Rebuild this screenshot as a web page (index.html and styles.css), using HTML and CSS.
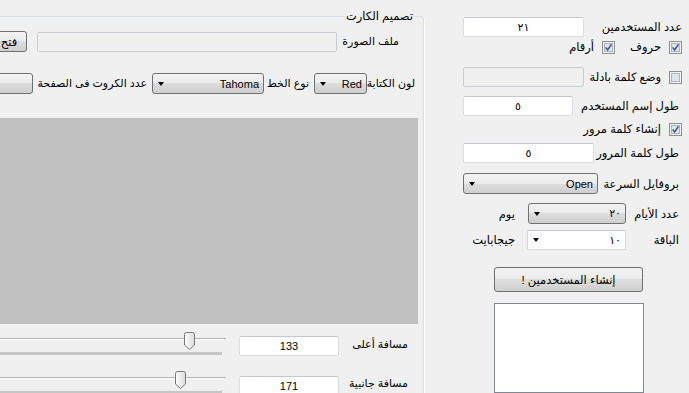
FILE: index.html
```html
<!DOCTYPE html>
<html lang="ar" dir="rtl">
<head>
<meta charset="UTF-8">
<title>إنشاء المستخدمين</title>
<link rel="stylesheet" href="styles.css">
</head>
<body>
<div class="window">

  <!-- users settings -->
  <div class="side">
    <div class="row r1">
      <span class="lbl">عدد المستخدمين</span>
      <span class="text push w121">٢١</span>
    </div>
    <div class="row r2">
      <svg class="check" viewBox="0 0 13 13"><rect x=".5" y=".5" width="12" height="12" fill="#f4f4f4" stroke="#8e8f8f"/><rect x="2.5" y="2.5" width="8" height="8" fill="#e1e4ea" stroke="#aeb3bb"/><path d="M3.6 6.4l2 2.6 3.9-5.6" fill="none" stroke="#3d518a" stroke-width="1.5"/></svg>
      <span class="lbl cl">حروف</span>
      <svg class="check c2" viewBox="0 0 13 13"><rect x=".5" y=".5" width="12" height="12" fill="#f4f4f4" stroke="#8e8f8f"/><rect x="2.5" y="2.5" width="8" height="8" fill="#e1e4ea" stroke="#aeb3bb"/><path d="M3.6 6.4l2 2.6 3.9-5.6" fill="none" stroke="#3d518a" stroke-width="1.5"/></svg>
      <span class="lbl cl">أرقام</span>
    </div>
    <div class="row r3">
      <svg class="check" viewBox="0 0 13 13"><rect x=".5" y=".5" width="12" height="12" fill="#f4f4f4" stroke="#8e8f8f"/><rect x="2.5" y="2.5" width="8" height="8" fill="#e1e4ea" stroke="#aeb3bb"/></svg>
      <span class="lbl cl">وضع كلمة بادلة</span>
      <span class="text off push w121"></span>
    </div>
    <div class="row r4">
      <span class="lbl ml">طول إسم المستخدم</span>
      <span class="text push w110">٥</span>
    </div>
    <div class="row r5">
      <svg class="check" viewBox="0 0 13 13"><rect x=".5" y=".5" width="12" height="12" fill="#f4f4f4" stroke="#8e8f8f"/><rect x="2.5" y="2.5" width="8" height="8" fill="#e1e4ea" stroke="#aeb3bb"/><path d="M3.6 6.4l2 2.6 3.9-5.6" fill="none" stroke="#3d518a" stroke-width="1.5"/></svg>
      <span class="lbl cl">إنشاء كلمة مرور</span>
    </div>
    <div class="row r6">
      <span class="lbl ml">طول كلمة المرور</span>
      <span class="text push w131">٥</span>
    </div>
    <div class="row r7">
      <span class="lbl ml">بروفايل السرعة</span>
      <span class="combo push w135"><span>Open</span><i class="arrow"></i></span>
    </div>
    <div class="row r8">
      <span class="lbl ml fix45">عدد الأيام</span>
      <span class="combo w98 gap8"><span>٢٠</span><i class="arrow"></i></span>
      <span class="lbl unit">يوم</span>
    </div>
    <div class="row r9">
      <span class="lbl ml fix45">الباقة</span>
      <span class="combo flat w99 gap8"><span>١٠</span><i class="arrow"></i></span>
      <span class="lbl unit u2">جيجابايت</span>
    </div>
    <div class="btn make">إنشاء المستخدمين !</div>
    <div class="list"></div>
  </div>

  <!-- card design -->
  <div class="group">
    <div class="g-title">تصميم الكارت</div>
    <div class="row ra">
      <span class="lbl fix52">ملف الصورة</span>
      <span class="text off w300 gap10"></span>
      <span class="btn open gap10">فتح</span>
    </div>
    <div class="row rb">
      <span class="lbl fix46">لون الكتابة</span>
      <span class="combo w53 gap2"><span>Red</span><i class="arrow"></i></span>
      <span class="lbl fix39 gap5">نوع الخط</span>
      <span class="combo w112 gap6"><span>Tahoma</span><i class="arrow"></i></span>
      <span class="lbl fix108 gap5">عدد الكروت فى الصفحة</span>
      <span class="combo w80 gap6"><span></span></span>
    </div>
    <div class="preview"></div>
    <div class="row rc">
      <span class="lbl fix61">مسافة أعلى</span>
      <span class="text num w100">133</span>
      <div class="track">
        <div class="track-line"></div>
        <svg class="thumb" style="right:31px" viewBox="0 0 11 18"><defs><linearGradient id="tg" x1="0" x2="1"><stop offset="0" stop-color="#fdfdfd"/><stop offset="1" stop-color="#dcdcdc"/></linearGradient></defs><path d="M.5 2.5Q.5.5 2.5.5h6q2 0 2 2V13l-5 4.5-5-4.5z" fill="url(#tg)" stroke="#777"/></svg>
        <div class="track-bar"></div>
      </div>
    </div>
    <div class="row rd">
      <span class="lbl fix61">مسافة جانبية</span>
      <span class="text num w100">171</span>
      <div class="track">
        <div class="track-line"></div>
        <svg class="thumb" style="right:40px" viewBox="0 0 11 18"><path d="M.5 2.5Q.5.5 2.5.5h6q2 0 2 2V13l-5 4.5-5-4.5z" fill="url(#tg)" stroke="#777"/></svg>
        <div class="track-bar"></div>
      </div>
    </div>
  </div>

</div>
</body>
</html>
```

FILE: styles.css
```css
* {
margin: 0;
padding: 0;
box-sizing: border-box;
}

html, body {
height: 100%;
background: #f0f0f0;
font-family: "Liberation Sans", "DejaVu Sans", sans-serif;
font-size: 11px;
color: #000;
overflow: hidden;
}

.window {
display: flex;
width: 689px;
height: 393px;
overflow: hidden;
}

.row {
display: flex;
align-items: center;
}

.lbl {
white-space: nowrap;
flex: none;
font-size: 11.5px;
}

/* right column */
.side {
flex: none;
width: 226px;
padding-right: 7px;
display: flex;
flex-direction: column;
}

.r1 { margin-top: 17px; height: 20px; }
.r2 { margin-top: 3px; height: 14px; }
.r3 { margin-top: 13px; height: 20px; }
.r4 { margin-top: 9px; height: 20px; }
.r5 { margin-top: 6px; height: 14px; }
.r6 { margin-top: 7px; height: 20px; }
.r7 { margin-top: 10px; height: 21px; }
.r8 { margin-top: 9px; height: 21px; }
.r9 { margin-top: 6px; height: 20px; }

.push { margin-inline-start: auto; }
.ml { margin-right: 3px; }
.cl { margin-right: 8px; }
.c2 { margin-right: 15px; }
.unit { margin-right: 13px; }
.u2 { margin-right: 12px; }

.fix45 { width: 45px; }
.fix52 { width: 52px; }
.fix46 { width: 46px; }
.fix39 { width: 39px; }
.fix108 { width: 108px; }
.fix61 { width: 61px; }

.gap2 { margin-right: 2px; }
.gap5 { margin-right: 5px; }
.gap6 { margin-right: 6px; }
.gap8 { margin-right: 8px; }
.gap10 { margin-right: 10px; }

.w53 { width: 53px; }
.w80 { width: 80px; }
.w98 { width: 98px; }
.w99 { width: 99px; }
.w100 { width: 100px; }
.w110 { width: 110px; }
.w112 { width: 112px; }
.w121 { width: 121px; }
.w131 { width: 131px; }
.w135 { width: 135px; }
.w300 { width: 300px; }

.check {
flex: none;
width: 13px;
height: 13px;
}

.text {
flex: none;
display: flex;
align-items: center;
justify-content: center;
height: 20px;
background: #fff;
border: 1px solid #dadde2;
border-top-color: #c4c8ce;
border-radius: 2px;
}

.text.off {
background: #f0f0f0;
border-color: #c9cdd2;
}

.combo {
flex: none;
display: flex;
align-items: center;
justify-content: space-between;
height: 21px;
padding: 0 4px 0 5px;
border: 1px solid #707070;
border-radius: 3px;
background: linear-gradient(#f3f3f3 0%, #ebebeb 50%, #dddddd 50%, #cfcfcf 100%);
}

.combo.flat {
height: 20px;
background: #fff;
border-color: #d5d9de;
border-top-color: #c4c8ce;
border-radius: 2px;
}

.arrow {
width: 0;
height: 0;
border-top: 4px solid #000;
border-left: 3.5px solid transparent;
border-right: 3.5px solid transparent;
}

.btn {
flex: none;
display: flex;
align-items: center;
justify-content: center;
font-size: 11.5px;
border: 1px solid #707070;
border-radius: 3px;
background: linear-gradient(#f2f2f2 0%, #ebebeb 50%, #dddddd 50%, #cfcfcf 100%);
}

.make {
margin-top: 17px;
margin-right: 39px;
width: 149px;
height: 25px;
}

.list {
margin-top: 11px;
margin-right: 38px;
width: 150px;
height: 100px;
background: #fff;
border: 1px solid #828790;
}

/* card design group */
.group {
flex: none;
width: 480px;
height: 400px;
margin-right: 39px;
margin-top: 16px;
border: 1px solid #d5dfe5;
border-radius: 3px;
box-shadow: 1px 1px 0 #fff;
}

.group .lbl { font-size: 11px; }

.g-title {
width: fit-content;
margin: -8px 9px 0 auto;
padding: 0 1px;
line-height: 15px;
font-size: 11.5px;
background: #f0f0f0;
}

.ra {
margin-top: 7px;
height: 21px;
}

.ra .fix52 { margin-right: 24px; }

.open {
width: 36px;
height: 21px;
}

.rb {
margin-top: 21px;
height: 21px;
}

.rb .fix46 { margin-right: 8px; }

.preview {
margin-top: 24px;
margin-right: 5px;
width: 500px;
height: 206px;
background: #c0c0c0;
}

.rc {
margin-top: 8px;
height: 24px;
}

.rd {
margin-top: 15px;
height: 24px;
}

.rc .fix61, .rd .fix61 { margin-right: 15px; }

.num {
align-self: flex-start;
margin-top: 4px;
margin-right: 8px;
}

.rd .num { margin-top: 5px; }

.track {
flex: none;
position: relative;
align-self: stretch;
width: 300px;
margin-right: 13px;
}

.track-line {
margin-top: 6px;
height: 2px;
border-top: 1px solid #b4b4b4;
border-bottom: 1px solid #fff;
}

.track-bar {
margin-top: 12px;
margin-right: 4px;
height: 3px;
background: #c6c6c6;
}

.thumb {
position: absolute;
top: 0;
width: 11px;
height: 18px;
}
```
